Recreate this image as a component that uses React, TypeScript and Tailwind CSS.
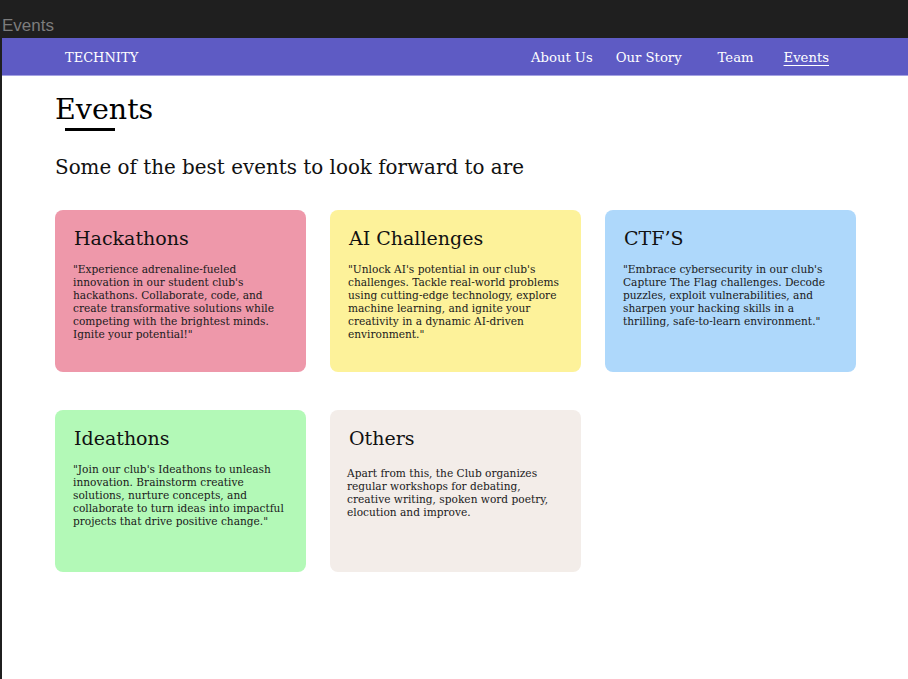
import React from "react";

const serif = { fontFamily: '"DejaVu Serif", "Liberation Serif", serif' };

type Card = { title: string; lines: string[]; bg: string; bodyPad?: string };

const cards: Card[] = [
  {
    title: "Hackathons",
    bg: "bg-[#ee98aa]",
    lines: [
      '"Experience adrenaline-fueled',
      "innovation in our student club's",
      "hackathons. Collaborate, code, and",
      "create transformative solutions while",
      "competing with the brightest minds.",
      'Ignite your potential!"',
    ],
  },
  {
    title: "AI Challenges",
    bg: "bg-[#fdf29a]",
    lines: [
      "\"Unlock AI's potential in our club's",
      "challenges. Tackle real-world problems",
      "using cutting-edge technology, explore",
      "machine learning, and ignite your",
      "creativity in a dynamic AI-driven",
      'environment."',
    ],
  },
  {
    title: "CTF\u2019S",
    bg: "bg-[#aed8fb]",
    lines: [
      "\"Embrace cybersecurity in our club's",
      "Capture The Flag challenges. Decode",
      "puzzles, exploit vulnerabilities, and",
      "sharpen your hacking skills in a",
      'thrilling, safe-to-learn environment."',
    ],
  },
  {
    title: "Ideathons",
    bg: "bg-[#b3f9b7]",
    lines: [
      "\"Join our club's Ideathons to unleash",
      "innovation. Brainstorm creative",
      "solutions, nurture concepts, and",
      "collaborate to turn ideas into impactful",
      'projects that drive positive change."',
    ],
  },
  {
    title: "Others",
    bg: "bg-[#f3ede9]",
    bodyPad: "-ml-[2px] pt-[16px]",
    lines: [
      "Apart from this, the Club organizes",
      "regular workshops for debating,",
      "creative writing, spoken word poetry,",
      "elocution and improve.",
    ],
  },
];

function EventCard({ c }: { c: Card }) {
  return (
    <div className={`${c.bg} rounded-[8px] h-[162px] pl-[19px] pr-2 pt-[15px]`}>
      <h3 className="text-[19px] leading-[26px] text-[#111]" style={serif}>
        {c.title}
      </h3>
      <p
        className={`${c.bodyPad ?? "-ml-[1px] pt-[12px]"} text-[10.6px] leading-[13px] text-[#1a1a1a] whitespace-nowrap`}
        style={serif}
      >
        {c.lines.map((l, i) => (
          <span key={i} className="block">
            {l}
          </span>
        ))}
      </p>
    </div>
  );
}

export default function App() {
  return (
    <div className="w-[908px] h-[679px] bg-[#1f1f1f] flex flex-col overflow-hidden">
      <div className="h-[38px] flex items-center pl-[2px] pt-[14px]">
        <span
          className="text-[#7c7c7c] text-[17px] leading-[20px]"
          style={{ fontFamily: '"Liberation Sans", Arial, sans-serif' }}
        >
          Events
        </span>
      </div>
      <div className="flex flex-1">
        <div className="w-[2px] bg-[#1f1f1f]" />
        <div className="flex-1 bg-white flex flex-col">
          <nav
            className="h-[38px] bg-[#5e5bc4] border-b border-[#a4a2e2] flex items-center pt-[2px] text-white"
            style={serif}
          >
            <span className="ml-[63px] text-[13px]">TECHNITY</span>
            <div className="ml-auto flex items-center text-[13.2px] mr-[79px]">
              <span className="mr-[23px]">About Us</span>
              <span className="mr-[36px]">Our Story</span>
              <span className="mr-[30px]">Team</span>
              <span className="underline underline-offset-[3px] decoration-[1px]">Events</span>
            </div>
          </nav>
          <main className="pl-[53px] pr-[50px]" style={serif}>
            <h1 className="mt-[17px] text-[28.5px] leading-[34px] text-black">Events</h1>
            <div className="ml-[10px] mt-[1px] w-[50px] h-[3px] bg-black" />
            <p className="mt-[23px] text-[19.9px] leading-[28px] text-[#111]">
              Some of the best events to look forward to are
            </p>
            <div className="mt-[28px] grid grid-cols-3 gap-x-[24px] gap-y-[38px] w-[801px]">
              {cards.map((c) => (
                <EventCard key={c.title} c={c} />
              ))}
            </div>
          </main>
        </div>
      </div>
    </div>
  );
}
